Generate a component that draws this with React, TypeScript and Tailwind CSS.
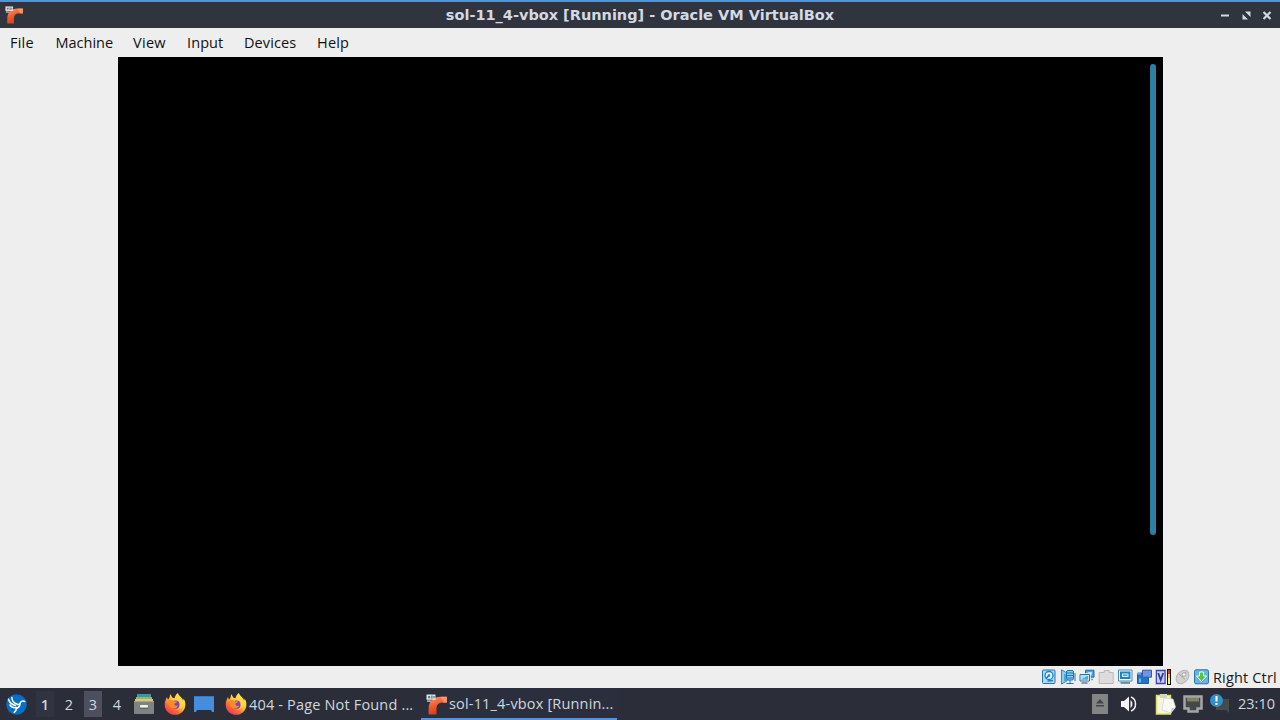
import type { ReactNode } from 'react';

const menuItems = [
  { label: 'File', style: 'w-[45.5px] tracking-[0.2px]' },
  { label: 'Machine', style: 'w-[77.5px]' },
  { label: 'View', style: 'w-[54px] tracking-[0.3px]' },
  { label: 'Input', style: 'w-[57px] tracking-[0.1px]' },
  { label: 'Devices', style: 'w-[73px] tracking-[0.1px]' },
  { label: 'Help', style: 'w-[40px] tracking-[0.2px]' },
];

const workspaces = [1, 2, 3, 4];
const ACTIVE_WORKSPACE = 3;

function VBoxIcon({ className }: { className: string }) {
  return (
    <svg className={className} viewBox="0 0 20 20">
      <defs>
        <linearGradient id="pipe" x1="0" y1="0" x2="0.4" y2="1">
          <stop offset="0" stopColor="#ff9b72" />
          <stop offset="0.55" stopColor="#f2592b" />
          <stop offset="1" stopColor="#d63c18" />
        </linearGradient>
      </defs>
      <path d="M2.5 19.5V14C2.5 7 7 2.7 14 2.7h6v5.6h-4.5c-4 0-5.5 2.2-5.5 6v5.2z" fill="url(#pipe)" />
      <path d="M14 2.7h6v5.6h-3z" fill="#ffb493" opacity=".55" />
      <path d="M.5.5h8.5v5H.5z" fill="#e4e7e9" />
      <path d="M2 2h2v2H2zM5 1.5h1.2v3H5zM7 2h1.2v2H7z" fill="#66727a" />
      <path d="M1 6h4v1.5H1z" fill="#b9bcc0" />
    </svg>
  );
}

function Firefox({ className }: { className: string }) {
  return (
    <svg className={className} viewBox="0 0 22 22">
      <defs>
        <linearGradient id="fox" x1="0.85" y1="0.05" x2="0.2" y2="1">
          <stop offset="0" stopColor="#fff04a" />
          <stop offset="0.45" stopColor="#ffc33a" />
          <stop offset="0.7" stopColor="#ff6a35" />
          <stop offset="1" stopColor="#ef3058" />
        </linearGradient>
      </defs>
      <path
        d="M14 0c.2 2 2 3.2 3.7 4.9.8.9 1.2 1.900 1.300 2.600.5-.5.6-1.200.5-2 1.400 2 2 4 1.900 6.700C20.900 18 16.600 21.800 11 21.800S.7 17.600.7 11.700c0-3 1-5 2.200-7.700L4 6.700l1.500-1.900L6.200 1l2.300 3.800c1 .1 1.500.3 2 .5C10.700 3.500 12 1.200 14 0z"
        fill="url(#fox)"
      />
      <circle cx="11.4" cy="11.7" r="4.100" fill="#7547c8" />
      <path d="M3.500 8c2-1.900 4.700-1.500 6.200.2l3.500.3c-.5 1.600-2.600 1.700-3 2.300.2 1.600 1.800 2.600 4 1.700-1 3.100-5.700 3.900-8 1.200C4.600 12 4.200 9.500 3.500 8z" fill="#ff8b26" />
      <path d="M12.500 5c2.500 1.300 4 3.500 3.700 7-.5 3-2.500 4.700-5 5 5-.2 8-3.500 7.500-7.500C17.500 6.500 15 4 12.500 5z" fill="#ffd84b" opacity=".75" />
    </svg>
  );
}

function LubuntuIcon() {
  return (
    <svg className="h-[21px] w-[21px]" viewBox="0 0 21 21">
      <circle cx="10.500" cy="10.500" r="10.300" fill="#0870c4" />
      <path d="M2.500 5.200c1 3.800 3.500 5.300 7 6.300M5.800 3.500c.3 3.800 2.500 5.800 5.200 6.500M4 11c1.500 2.500 3.700 3 6.500 2.500M18.800 7.500c-2.500-1-4.600 0-4.800 2.500-.1 2.500-1.500 3.800-3.500 4.500-.3 1.700-1 3-2.300 4M11 10c.5.800 1.700.7 3-.3" fill="none" stroke="#fff" strokeWidth="1.500" strokeLinecap="round" />
    </svg>
  );
}

function FilesIcon() {
  return (
    <svg className="h-[22px] w-[20px]" viewBox="0 0 20 22">
      <path d="M3 1h14v4H3z" fill="#3f92a8" />
      <path d="M2 4h16v3H2z" fill="#80bd72" />
      <path d="M1 6h18v3H1z" fill="#e6c566" />
      <rect y="8" width="20" height="13" rx="1" fill="#818383" />
      <path d="M0 8h20v1H0z" fill="#a3a195" />
      <rect x="6" y="12" width="8" height="2.500" rx="1" fill="#f1f1eb" />
      <path d="M6 15h8v1H6z" fill="#616363" />
    </svg>
  );
}

function StatusIcon({ children }: { children: ReactNode }) {
  return (
    <svg className="h-4 w-4 shrink-0" viewBox="0 0 16 16">
      {children}
    </svg>
  );
}

function StatusBar() {
  return (
    <div className="flex h-[22px] items-center justify-end bg-[#eeeeef] pr-[2px]">
      <div className="flex items-center gap-[3px]">
        {/* hard disk */}
        <StatusIcon>
          <rect x="1.500" y="1" width="12.500" height="13.500" rx="1" fill="#a9dcf8" stroke="#2872ae" />
          <circle cx="8" cy="6.500" r="4" fill="#e4f7ff" stroke="#247fc4" strokeWidth="1.300" />
          <path d="M8 6.500l-3 3M6.500 12l5.500-.5" stroke="#1d7fc6" strokeWidth="1.700" />
          <circle cx="8" cy="6.500" r="1.300" fill="#247fc4" />
        </StatusIcon>
        {/* audio */}
        <StatusIcon>
          <path d="M1.500.8L7 4v8l-5.500 3z" fill="#8fd0f2" stroke="#2f8ac0" />
          <rect x="6.500" y="1.500" width="7" height="9.500" rx="1.500" fill="#8bcbf0" stroke="#1f78b5" />
          <path d="M7 4h6M7 6.500h6M7 9h6M10 11v3M6.500 14.500h7M5 5v7M15 4v8" stroke="#1f78b5" />
        </StatusIcon>
        {/* network */}
        <StatusIcon>
          <path d="M6.500 1.200H15v7H6.500z" fill="#49a6dd" stroke="#2c6794" />
          <path d="M8 3l5 3V3z" fill="#b2e5fa" />
          <path d="M9 10.500h5" stroke="#899eaa" strokeWidth="1.500" />
          <path d="M1 5.500h9.500v6.500H1z" fill="#49b0d8" stroke="#eef8fb" strokeWidth="2.500" />
          <path d="M1 5.500h9.500v6.500H1z" fill="none" stroke="#2c6f9b" />
          <path d="M2 10.500l7-4H2z" fill="#a8e3f2" />
          <path d="M2.500 14h6" stroke="#667f8e" strokeWidth="1.500" />
        </StatusIcon>
        {/* shared folders */}
        <StatusIcon>
          <path d="M1.200 3.500h5v-2h5v2h4v11h-14z" fill="#dcdcdd" stroke="#b8b8b9" />
        </StatusIcon>
        {/* display */}
        <StatusIcon>
          <path d="M1.500 1h13.500v11h-13.500z" fill="#f4fbff" stroke="#4d88a9" />
          <path d="M4 3.500h8.500v5.500H4z" fill="#d7f3ff" stroke="#1c83c4" strokeWidth="2" />
          <path d="M6 5.500h4.500V7H6z" fill="#39a2d8" />
          <path d="M3.500 13.800h9.500" stroke="#6c8795" strokeWidth="2" />
        </StatusIcon>
        {/* recording */}
        <StatusIcon>
          <path d="M1.500 4h11v10.500h-11z" fill="#2474c6" stroke="#195da3" />
          <path d="M1.500 4.500h4" stroke="#c6e5f8" strokeWidth="2" strokeDasharray="1 1" />
          <path d="M6.500 1.200h9v7h-9z" fill="#6d96e6" stroke="#3657b0" />
          <path d="M3 9.500h2v4H3z" fill="#68b8e8" />
        </StatusIcon>
        {/* cpu */}
        <StatusIcon>
          <rect x="1.200" y="1.500" width="9" height="13" fill="#c9cef5" stroke="#3b45ac" strokeWidth="1.500" />
          <path d="M.5 1.500v13M11 1.500v13" stroke="#eeeeef" strokeDasharray="1 1" />
          <path d="M3.200 4l2.500 7 2.500-7" fill="none" stroke="#303b9d" strokeWidth="1.800" />
          <path d="M12 0h4v16h-4z" fill="#111" />
          <path d="M13 1h2v4h-2z" fill="#d63c2c" />
          <path d="M13 5h2v4h-2z" fill="#efb653" />
          <path d="M13 9h2v6h-2z" fill="#eef08a" />
        </StatusIcon>
        {/* mouse */}
        <StatusIcon>
          <ellipse cx="8.500" cy="8" rx="5.500" ry="7.500" fill="#d2d2d2" stroke="#b5b5b5" transform="rotate(40 8.500 8)" />
          <path d="M5 5l6 5.500M8 8l4-5" stroke="#a8a8a8" />
          <circle cx="10" cy="5.500" r="1.800" fill="#f4f4f4" stroke="#aaa" />
        </StatusIcon>
        {/* keyboard capture */}
        <StatusIcon>
          <rect x="1.500" y=".8" width="14" height="14" rx="1.500" fill="#65b5df" stroke="#2b76a6" />
          <path d="M6.500 3h4v4h3l-5 5.500-5-5.500h3z" fill="#4ecb3d" stroke="#effff0" />
        </StatusIcon>
      </div>
      <span className="ml-[4px] w-[65px] whitespace-nowrap pt-[2px] font-['Open_Sans','Noto_Sans',sans-serif] text-[14.5px] leading-5 tracking-[0.16px] text-[#17191b]">
        Right Ctrl
      </span>
    </div>
  );
}

function Tray() {
  return (
    <div className="ml-auto flex h-full items-center">
      <svg className="h-5 w-4" viewBox="0 0 16 20">
        <path d="M0 0h16v20H0z" fill="#848484" />
        <path d="M4 9.500L8 5l4 4.500zM4 11h8v1.500H4z" fill="#41454b" />
      </svg>
      <svg className="ml-[12px] h-[18px] w-[18px]" viewBox="0 0 18 18">
        <path d="M1 6h3l5-4.500v15L4 12H1z" fill="#f4f4f5" />
        <path d="M10.500 5c2.500 1.500 2.500 6.500 0 8z" fill="#f4f4f5" />
        <path d="M11 2c6 2.200 6 11.800 0 14" fill="none" stroke="#eceeef" strokeWidth="1.500" />
      </svg>
      <svg className="ml-[17px] h-[22px] w-[21px]" viewBox="0 0 21 22">
        <path d="M1.500 2.500h14V21h-14z" fill="#f4f3e5" stroke="#dfe35c" strokeWidth="1.500" />
        <path d="M5 1h7v4H5z" fill="#d1d6bd" />
        <path d="M9 5l9 1 2.500 8-4.500 6-9-3z" fill="#f9f9f6" stroke="#d1d0c8" strokeWidth=".7" />
        <path d="M15.500 20l1.500-5h3.500z" fill="#cbcac4" />
      </svg>
      <svg className="ml-[7px] h-[20px] w-[20px]" viewBox="0 0 20 20">
        <path d="M1.500 2.500h17v12h-4v3h-9v-3h-4z" fill="#454748" stroke="#a5a7a7" strokeWidth="2.500" />
        <path d="M5 3.500v4M7 3.500v4M9 3.500v4M11 3.500v4M13 3.500v4M15 3.500v4" stroke="#c7bd88" />
      </svg>
      <svg className="ml-[7px] h-[20px] w-[20px]" viewBox="0 0 20 20">
        <path d="M9 5h10v14l-3-3H6V9z" fill="#454a4b" />
        <circle cx="6.500" cy="6.500" r="6.500" fill="#328fcc" />
        <path d="M6.500 2v5.500M6.500 9v2" stroke="#fff" strokeWidth="2" />
      </svg>
      <span className="ml-[8px] w-[42px] whitespace-nowrap text-[14.5px]">23:10</span>
    </div>
  );
}

function Taskbar() {
  return (
    <div className="flex h-8 items-center bg-[#2b2d39] pl-[6px] font-['Open_Sans','Noto_Sans',sans-serif] text-[14.5px] text-[#cfd7df]">
      <LubuntuIcon />
      <div className="ml-[9px] flex gap-[6px]">
        {workspaces.map(n => (
          <div
            key={n}
            className={`flex h-[26px] w-[18px] items-center justify-center pt-px ${
              n === ACTIVE_WORKSPACE ? 'bg-[#4c505e]' : n === 1 ? 'bg-[#303442] font-semibold' : ''
            }`}
          >
            {n}
          </div>
        ))}
      </div>
      <div className="ml-[8px] flex items-center">
        <FilesIcon />
        <Firefox className="ml-[10px] h-[22px] w-[22px]" />
        <svg className="ml-[8px] h-[18px] w-[20px]" viewBox="0 0 20 18">
          <path d="M0 1h20v16h-2l-1-2H3l-1 2H0z" fill="#478dde" />
          <path d="M0 1h20v1H0z" fill="#3a79c4" />
        </svg>
      </div>
      <div className="ml-[11px] flex h-full w-[196px] items-center">
        <Firefox className="h-[22px] w-[22px] shrink-0" />
        <span className="ml-[2px] whitespace-nowrap pt-px tracking-[0.17px]">404 - Page Not Found ...</span>
      </div>
      <div className="flex h-full w-[196px] items-center border-b-2 border-[#5294e2] bg-[#2b2f3d] pl-[5px] pt-[2px]">
        <VBoxIcon className="h-[21px] w-[21px] shrink-0" />
        <span className="ml-[2px] whitespace-nowrap tracking-[0.17px]">sol-11_4-vbox [Runnin...</span>
      </div>
      <Tray />
    </div>
  );
}

export default function App() {
  return (
    <div className="flex h-[720px] w-[1280px] flex-col overflow-hidden bg-[#eeeeef]">
      {/* Title bar */}
      <div className="grid h-7 grid-cols-[1fr_auto_1fr] items-center border-t-2 border-[#5294d6] bg-[#2f343f] px-[5px]">
        <VBoxIcon className="h-[18px] w-[18px]" />
        <h1 className="whitespace-nowrap font-['DejaVu_Sans',sans-serif] text-[14.5px] font-bold leading-5 text-[#d3dae3]">
          sol-11_4-vbox [Running] - Oracle VM VirtualBox
        </h1>
        <div className="flex items-center justify-end gap-[12px] pr-[3px] text-[#d3dae3]">
          <svg className="h-[9px] w-[9px]" viewBox="0 0 9 9">
            <path d="M0 3.500h8v2H0z" fill="currentColor" />
          </svg>
          <svg className="h-[9px] w-[9px]" viewBox="0 0 9 9">
            <path d="M3 .5h5.500V6zM.5 3L6 8.500H.5z" fill="currentColor" />
          </svg>
          <svg className="h-[9px] w-[9px]" viewBox="0 0 9 9">
            <path d="M.5 1l7 7M7.500 1l-7 7" stroke="currentColor" strokeWidth="2.200" />
          </svg>
        </div>
      </div>

      {/* Menu bar */}
      <div className="flex h-[29px] items-center pl-[10px] font-['Open_Sans','Noto_Sans',sans-serif] text-[14.5px] text-[#111]">
        {menuItems.map(item => (
          <span key={item.label} className={`${item.style} whitespace-nowrap`}>
            {item.label}
          </span>
        ))}
      </div>

      {/* Guest display */}
      <div className="ml-[118px] flex h-[609px] w-[1045px] justify-end bg-black pr-[7px] pt-[7px]">
        <div className="h-[471px] w-[6px] rounded-full bg-[#2d7fa6]" />
      </div>

      <StatusBar />
      <Taskbar />
    </div>
  );
}
